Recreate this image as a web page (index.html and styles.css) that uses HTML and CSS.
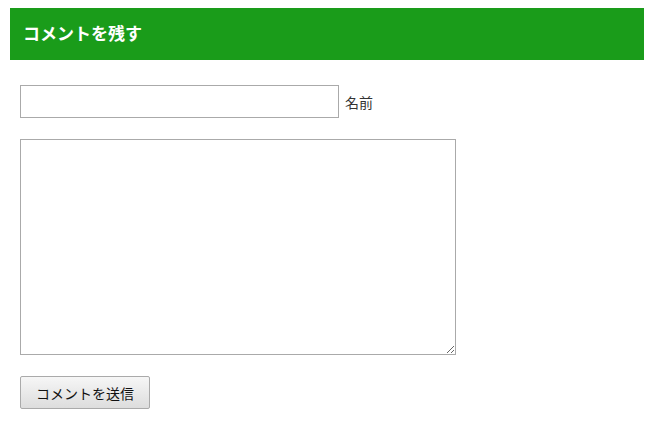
FILE: index.html
```html
<!DOCTYPE html>
<html lang="ja">
<head>
    <meta charset="UTF-8">
    <meta name="viewport" content="width=device-width, initial-scale=1.0">
    <title>コメントを残す</title>
    <link rel="stylesheet" href="styles.css">
</head>
<body>
    <div class="comments">
        <h3 class="comments-title">コメントを残す</h3>
        <form class="comment-form">
            <p class="field">
                <input type="text" id="author" class="author">
                <label for="author">名前</label>
            </p>
            <p class="field">
                <textarea id="comment" class="comment"></textarea>
            </p>
            <p class="submit">
                <button type="button">コメントを送信</button>
            </p>
        </form>
    </div>
</body>
</html>
```

FILE: styles.css
```css
body {
    font-family: "Noto Sans CJK JP", "Liberation Sans", sans-serif;
    color: #333;
    margin: 0;
    padding: 8px 9px 0 10px;
}

.comments-title {
    background-color: #1a9c1a;
    color: #fff;
    font-size: 17px;
    font-weight: bold;
    height: 52px;
    line-height: 50px;
    margin: 0;
    padding: 0 13px;
}

.comment-form {
    padding: 25px 10px 0;
}

.field {
    display: flex;
    align-items: center;
    margin: 0 0 21px;
}

.author {
    box-sizing: border-box;
    width: 319px;
    height: 33px;
    border: 1px solid #aaa;
    margin: 0 6px 0 0;
    padding: 4px 6px;
    font-size: 14px;
}

.field label {
    font-size: 14px;
    color: #333;
}

.comment {
    box-sizing: border-box;
    width: 436px;
    height: 216px;
    border: 1px solid #aaa;
    margin: 0;
    padding: 4px 6px;
}

.submit {
    margin: 0;
}

.submit button {
    width: 130px;
    height: 33px;
    border: 1px solid #aaa;
    border-radius: 2px;
    background: linear-gradient(#f6f6f6, #dddddd);
    font-family: "Noto Sans CJK JP", sans-serif;
    font-size: 14px;
    color: #111;
    padding: 0;
    cursor: pointer;
}
```
